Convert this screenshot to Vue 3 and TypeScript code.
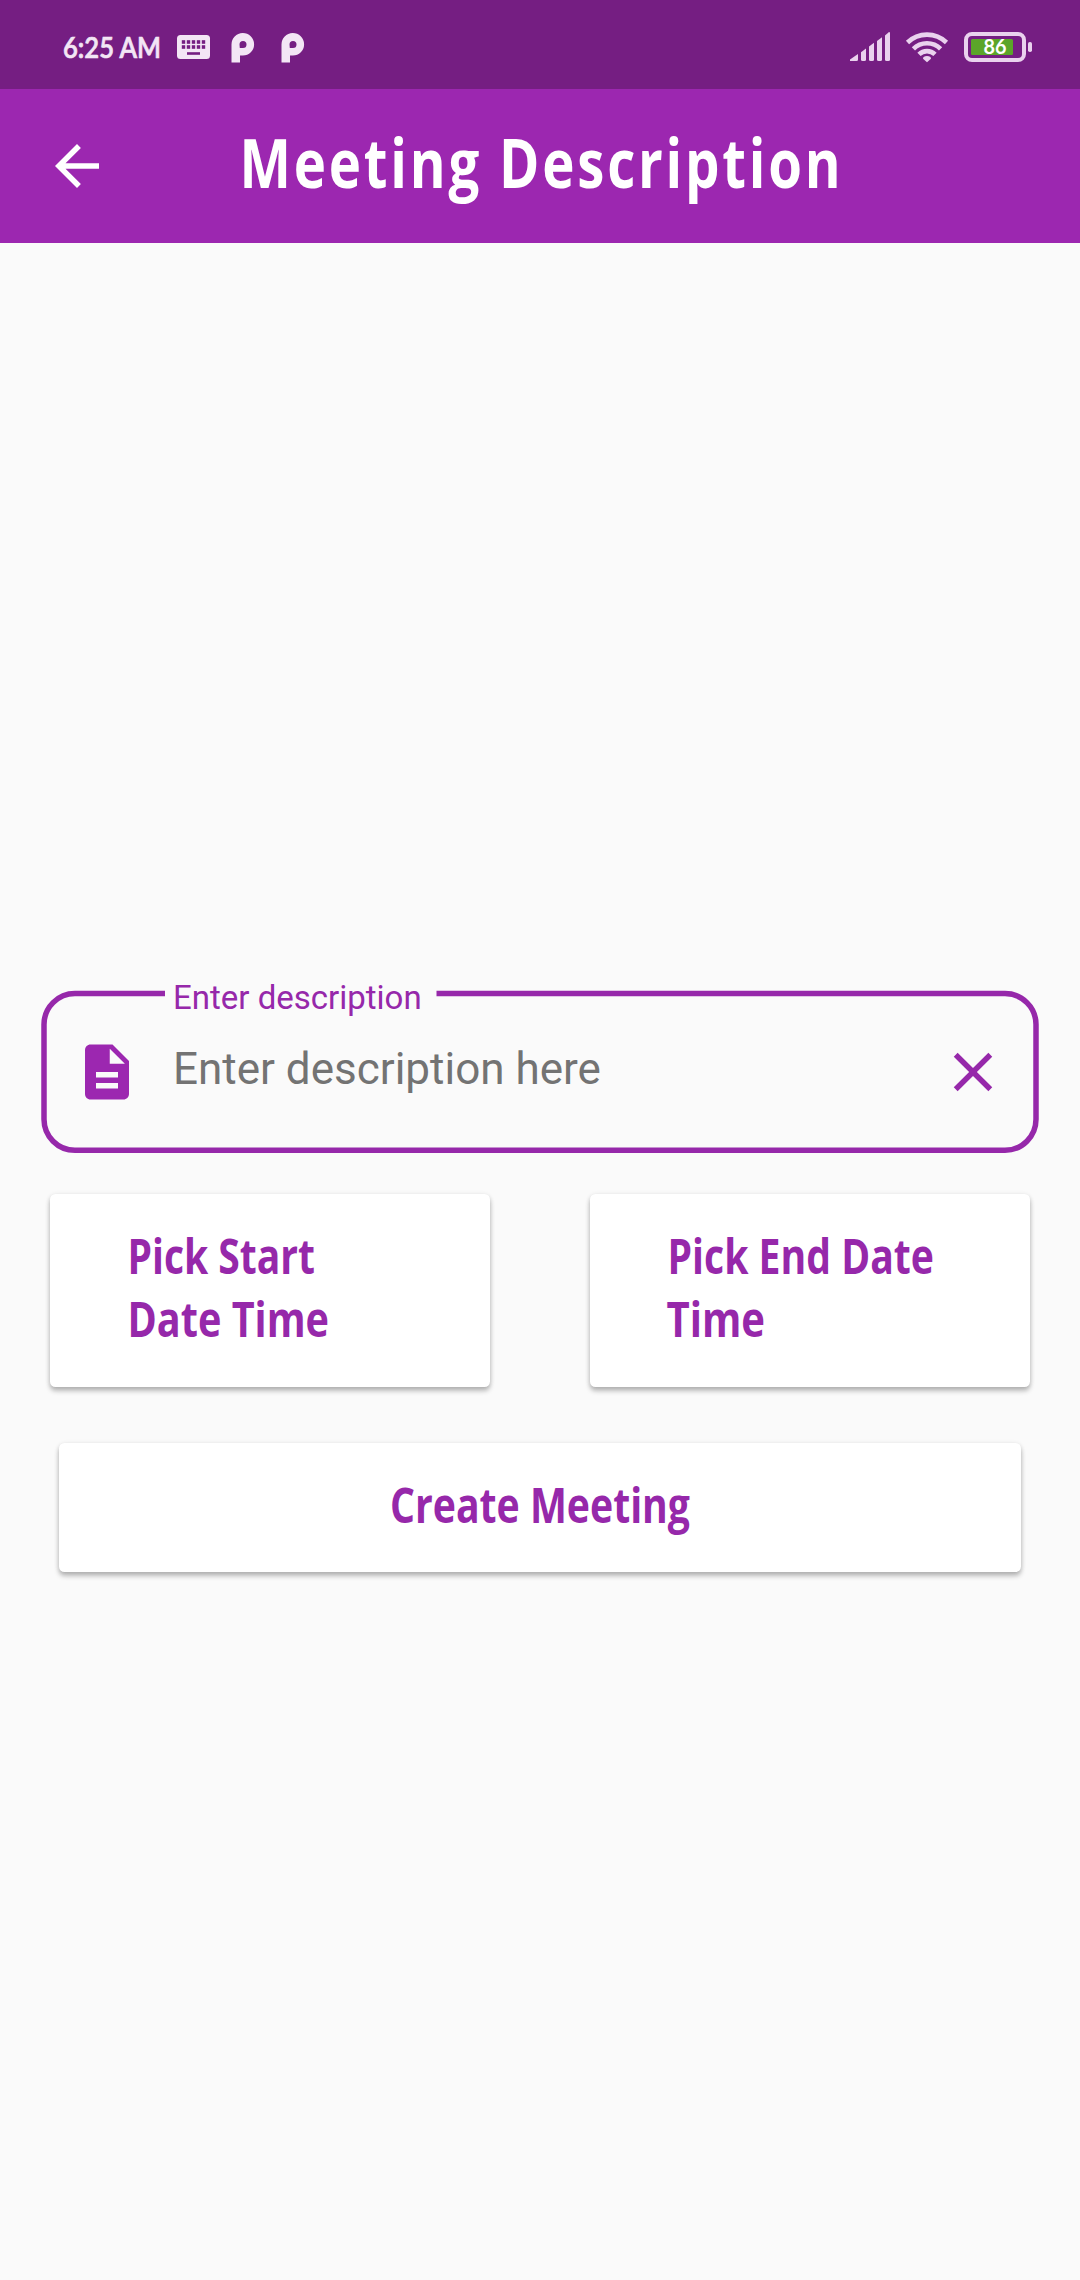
<script setup lang="ts">
interface ButtonLine {
  text: string
  x: number
  width: number
}

const signalBars: string[] = [
  'M0 29V27.4L8 22V27.5Q8 29 6.5 29H1Z',
  'M11 20.2L16 16.5V27.5Q16 29 14.5 29H12.500Q11 29 11 27.5Z',
  'M19 14.6L24 10.8V27.5Q24 29 22.500 29H20.500Q19 29 19 27.5Z',
  'M27 8.9L32 5.2V27.5Q32 29 30.500 29H28.500Q27 29 27 27.5Z',
  'M35 3.400L39 0Q40 0 40 1V27.5Q40 29 38.500 29H36.500Q35 29 35 27.5Z',
]

const startLines: ButtonLine[] = [
  { text: 'Pick Start', x: 77.5, width: 187.5 },
  { text: 'Date Time', x: 77.5, width: 201.5 },
]
const endLines: ButtonLine[] = [
  { text: 'Pick End Date', x: 77.5, width: 266.5 },
  { text: 'Time', x: 76.5, width: 98.5 },
]
</script>

<template>
  <div class="screen">
    <header class="status">
      <svg class="clock" width="104" height="40">
        <text x="1" y="30" textLength="98" lengthAdjust="spacingAndGlyphs">6:25 AM</text>
      </svg>
      <svg class="keyboard" width="33" height="24" viewBox="0 0 33 24">
        <rect width="33" height="24" rx="3.500" fill="#f3e6f5" />
        <g fill="#751e82">
          <template v-for="c in 5" :key="c">
            <rect :x="c * 5 - 0.200" y="5.200" width="3.400" height="3.600" />
            <rect :x="c * 5 - 0.200" y="10.200" width="3.400" height="3.600" />
          </template>
          <rect x="10" y="17.200" width="13" height="2.600" />
        </g>
      </svg>
      <svg v-for="n in 2" :key="n" :class="['app-mark', `mark-${n}`]" width="24" height="30" viewBox="0 0 24 30">
        <path
          fill="#f3e6f5"
          fill-rule="evenodd"
          d="M0.500 29.500V11.500A11.300 11.300 0 1 1 11.800 22.600H9V29.500ZM8.800 15H12A3.500 3.500 0 1 0 8.500 11.500Z"
        />
      </svg>
      <svg class="signal" width="40" height="30" viewBox="0 0 40 30" fill="#ead2ee">
        <path v-for="d in signalBars" :key="d" :d="d" />
      </svg>
      <svg class="wifi" width="42" height="30" viewBox="0 0 42 30" fill="none" stroke="#ead2ee" stroke-width="4.600">
        <path d="M1.500 10.500A28 28 0 0 1 40.500 10.500" />
        <path d="M7.400 16.800A19.300 19.300 0 0 1 34.600 16.800" />
        <path d="M13 22.400A11.300 11.300 0 0 1 29 22.400" />
        <path d="M21 30.200L17 26.700Q17 24 21 24T25 26.700Z" fill="#ead2ee" stroke="none" />
      </svg>
      <svg class="battery" width="69" height="30" viewBox="0 0 69 30">
        <rect x="2" y="2" width="58" height="26" rx="6" fill="none" stroke="#ead2ee" stroke-width="4" />
        <rect x="7" y="7" width="42" height="16" rx="1.500" fill="#5ba529" />
        <rect x="64" y="10" width="4" height="10" rx="1.800" fill="#ead2ee" />
        <text x="19.500" y="21.500" textLength="23" lengthAdjust="spacingAndGlyphs">86</text>
      </svg>
    </header>

    <nav class="appbar">
      <svg class="back" width="66" height="66" viewBox="0 0 24 24" fill="#fff">
        <path d="M20 11H7.830l5.590-5.590L12 4l-8 8 8 8 1.410-1.410L7.830 13H20v-2z" />
      </svg>
      <svg class="title" width="606" height="90">
        <text x="1.500" y="54.500" textLength="604" lengthAdjust="spacingAndGlyphs">Meeting Description</text>
      </svg>
    </nav>

    <main class="content">
      <section class="field">
        <svg class="outline" width="998" height="164" fill="none" stroke="#9628aa" stroke-width="5.500">
          <path
            d="M124 3.500H34A31 31 0 0 0 3 34.500V129.300A31 31 0 0 0 34 160.300H964A31 31 0 0 0 995 129.300V34.500A31 31 0 0 0 964 3.500H395.500"
          />
        </svg>
        <label class="label">Enter description</label>
        <svg class="doc" width="66" height="66" viewBox="0 0 24 24" fill="#9c27b0">
          <path
            d="M14 2H6c-1.100 0-1.990.9-1.990 2L4 20c0 1.100.890 2 1.990 2H18c1.100 0 2-.9 2-2V8l-6-6zm2 16H8v-2h8v2zm0-4H8v-2h8v2zm-3-5V3.500L18.500 9H13z"
          />
        </svg>
        <span class="hint">Enter description here</span>
        <svg class="clear" width="66" height="66" viewBox="0 0 24 24" fill="#9628aa">
          <path
            d="M19 6.410L17.590 5 12 10.590 6.410 5 5 6.410 10.590 12 5 17.590 6.410 19 12 13.410 17.590 19 19 17.590 13.410 12z"
          />
        </svg>
      </section>

      <div class="row">
        <button v-for="(lines, i) in [startLines, endLines]" :key="i" class="btn pick">
          <svg v-for="line in lines" :key="line.text" class="line" width="440" height="63">
            <text :x="line.x" y="49" :textLength="line.width" lengthAdjust="spacingAndGlyphs">{{ line.text }}</text>
          </svg>
        </button>
      </div>

      <button class="btn create">
        <svg class="line" width="306" height="63">
          <text x="3" y="47.500" textLength="300" lengthAdjust="spacingAndGlyphs">Create Meeting</text>
        </svg>
      </button>
    </main>
  </div>
</template>

<style>
body {
  margin: 0;
  background: #fafafa;
}
</style>

<style scoped>
.screen {
  width: 1080px;
  height: 2280px;
  display: flex;
  flex-direction: column;
  overflow: hidden;
  background: #fafafa;
  font-family: Roboto, 'Liberation Sans', sans-serif;
}

svg {
  display: block;
  flex: none;
  overflow: visible;
}

.status {
  height: 89px;
  flex: none;
  display: flex;
  align-items: flex-start;
  background: #751e82;
}

.clock {
  margin: 28px 0 0 62px;
}

.clock text {
  font: 600 29px Lato, sans-serif;
  fill: #f3e6f5;
  stroke: #f3e6f5;
  stroke-width: 0.7px;
}

.keyboard {
  margin: 35px 0 0 11px;
}

.app-mark {
  margin-top: 32.5px;
}

.mark-1 {
  margin-left: 21px;
}

.mark-2 {
  margin-left: 26px;
}

.signal {
  margin: 32px 0 0 auto;
}

.wifi {
  margin: 32px 0 0 16px;
}

.battery {
  margin: 32px 47px 0 16px;
}

.battery text {
  font: 700 20px Lato, sans-serif;
  fill: #fff;
}

.appbar {
  height: 154px;
  flex: none;
  display: flex;
  align-items: flex-start;
  background: #9c27b0;
}

.back {
  margin: 44px 0 0 44px;
}

.title {
  margin: 44px 0 0 128px;
}

.title text {
  font: 700 68.5px 'Open Sans', 'Noto Sans', sans-serif;
  letter-spacing: 3.5px;
  fill: #fff;
}

.content {
  padding-top: 747px;
  display: flex;
  flex-direction: column;
}

.field {
  position: relative;
  width: 998px;
  height: 164px;
  margin: 0 41px;
  display: flex;
  align-items: flex-start;
}

.outline {
  position: absolute;
  inset: 0;
}

.label {
  position: absolute;
  left: 132px;
  top: -12px;
  font-size: 33px;
  line-height: 39px;
  color: #9628aa;
  white-space: nowrap;
}

.doc {
  margin: 49px 0 0 33px;
}

.hint {
  margin: 53px auto 0 33px;
  font-size: 44px;
  line-height: 52px;
  color: #737373;
  white-space: nowrap;
}

.clear {
  margin: 49px 33px 0 0;
}

.row {
  display: flex;
  justify-content: space-between;
  margin: 40px 50px 0;
}

.btn {
  display: flex;
  flex-direction: column;
  border: 0;
  padding: 0;
  border-radius: 5.5px;
  background: #fff;
  box-shadow: 0 4px 5px rgba(0, 0, 0, 0.24), 0 1px 5px rgba(0, 0, 0, 0.12);
}

.pick {
  width: 440px;
  height: 193px;
  padding-top: 31px;
}

.create {
  width: 962px;
  height: 129px;
  margin: 56px auto 0 59px;
  align-items: center;
  padding-top: 32px;
}

.line text {
  font: 700 49px 'Open Sans', 'Noto Sans', sans-serif;
  fill: #9628aa;
}
</style>
